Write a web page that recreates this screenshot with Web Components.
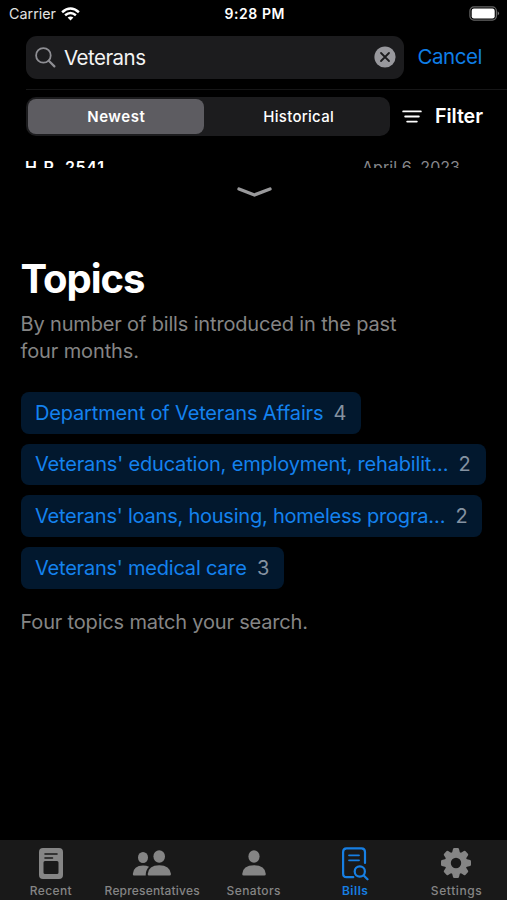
<!DOCTYPE html>
<html lang="en">
<head>
<meta charset="utf-8">
<title>Bills</title>
<style>
html,body{margin:0;background:#000;height:100%}
body{font-family:Inter,"Liberation Sans",sans-serif;color:#fff;overflow:hidden}
</style>
</head>
<body>
<bills-app></bills-app>
<script>
const define=(name,html,setup)=>customElements.define(name,class extends HTMLElement{
  connectedCallback(){
    if(this.shadowRoot)return;
    const root=this.attachShadow({mode:'open'});
    root.innerHTML=html;
    if(setup)setup(this,root);
  }
});

/* One line of text tracked to fill the given width. */
define('fit-text','<style>:host{display:block;flex:none;white-space:pre}span{display:inline-block}</style><span></span>',(el,root)=>{
  const span=root.querySelector('span'),text=el.getAttribute('text'),w=+el.getAttribute('w');
  span.textContent=text;
  el.style.width=w+'px';
  const natural=span.getBoundingClientRect().width;
  span.style.letterSpacing=(w-natural)/(text.length-1)+'px';
});

define('status-bar',`<style>
:host{display:grid;grid-template-columns:1fr auto 1fr;align-items:center;height:27px;padding:0 7px 0 9px;font-size:14.3px;line-height:18px;box-sizing:border-box}
.l{display:flex;align-items:center;gap:5px;color:#e2e2e2}.c{font-weight:600;font-size:14px}.r{justify-self:end;display:block}
</style>
<div class="l"><fit-text text="Carrier" w="47"></fit-text>
<svg width="19" height="14" viewBox="0 0 19 14" fill="none" stroke="#fff" stroke-width="2.5"><path d="M1.1 5.2Q9.5-2.2 17.9 5.2M4.1 8.3Q9.5 3.7 14.9 8.3"/><path d="M6.6 10.6Q9.5 8.2 12.4 10.6L9.5 13.6Z" fill="#fff" stroke="none"/></svg></div>
<div class="c"><fit-text text="9:28 PM" w="60"></fit-text></div>
<svg class="r" width="31" height="15" viewBox="0 0 31 15"><rect x=".9" y=".9" width="26.5" height="13.2" rx="4" fill="none" stroke="#666" stroke-width="1.2"/><rect x="2.7" y="2.6" width="23" height="9.8" rx="2.2" fill="#fff"/><path d="M28.7 5.2Q31.4 7.4 28.7 9.6Z" fill="#777"/></svg>`);

define('search-row',`<style>
:host{display:flex;align-items:center;padding:8.5px 0 10px 26px;font-size:20.5px;line-height:26px;gap:13.5px}
.f{display:flex;align-items:center;box-sizing:border-box;width:378px;height:43.5px;border-radius:11px;background:#1c1c1e;padding:0 8px 0 9px}
.f fit-text{margin-left:8px;margin-right:auto;margin-top:1px;color:#f4f4f4}
.c{color:#0f7ee6}svg{display:block}
</style>
<div class="f"><svg width="21" height="21" viewBox="0 0 21 21" fill="none" stroke="#8e8e93" stroke-width="1.8" stroke-linecap="round"><circle cx="8.4" cy="8.4" r="7.3"/><path d="M13.8 13.8L19.4 19.4" stroke-width="2.2"/></svg>
<fit-text text="Veterans" w="82"></fit-text>
<svg width="22" height="22" viewBox="0 0 22 22"><circle cx="11" cy="11" r="10.6" fill="#98989d"/><path d="M7 7l8 8M15 7l-8 8" stroke="#1c1c1e" stroke-width="1.8" stroke-linecap="round"/></svg></div>
<div class="c"><fit-text text="Cancel" w="65"></fit-text></div>`);

define('filter-row',`<style>
:host{display:flex;align-items:center;padding:7px 0 0 26px}
.s{display:flex;box-sizing:border-box;width:364px;height:39px;padding:2px;background:#1c1c1e;border-radius:10px;font-size:15px;line-height:20px;font-weight:500}
.s div{flex:1;display:flex;align-items:center;justify-content:center;border-radius:8px}
.s .on{flex:0 0 176px;background:#5d5c61;font-weight:600}
.s .off{padding-left:5px}
svg{margin:0 13px 0 12px}
.t{font-size:19.7px;line-height:26px;font-weight:600;margin-top:-2px}
</style>
<div class="s"><div class="on"><fit-text text="Newest" w="57.5"></fit-text></div><div class="off"><fit-text text="Historical" w="70.5"></fit-text></div></div>
<svg width="20" height="16" viewBox="0 0 20 16" stroke="#fff" stroke-width="1.9" stroke-linecap="round"><path d="M1.2 2.4H18.8M3.2 7.5H16.8M5.2 12.6H14.8"/></svg>
<div class="t"><fit-text text="Filter" w="48"></fit-text></div>`);

define('bill-peek',`<style>
:host{display:flex;justify-content:space-between;box-sizing:border-box;height:32px;padding:18.5px 47px 0 25px;overflow:hidden;font-size:16px;line-height:24px}
.a{font-weight:600}.b{color:#87878b}
</style>
<div class="a"><fit-text text="H.R. 2541" w="79"></fit-text></div><div class="b"><fit-text text="April 6, 2023" w="98"></fit-text></div>`);

define('topic-chip',`<style>
:host{display:flex;align-items:center;gap:10px;box-sizing:border-box;height:41.5px;padding-left:14.5px;border-radius:8px;background:#02182e;color:#1482ef;font-size:20px;line-height:26px}
.n{color:#8592a1}
</style><span class="n"></span>`,(el,root)=>{
  el.style.width=el.getAttribute('width')+'px';
  const n=root.querySelector('.n'),t=document.createElement('fit-text');
  n.textContent=el.getAttribute('count');
  t.setAttribute('text',el.getAttribute('label'));t.setAttribute('w',el.getAttribute('tw'));
  n.before(t);
});

define('topic-panel',`<style>
:host{display:block;padding:19px 0 0 20.5px;font-size:20px;line-height:27px;color:#858585}
.h{display:block;margin:0 0 0 216px}
h1{margin:57px 0 0;color:#fff;font-size:40px;line-height:48px;font-weight:700}
.d{margin-top:8px}
.g{display:flex;flex-direction:column;gap:10.2px;margin:27px 0 20px}
</style>
<svg class="h" width="35" height="11" viewBox="0 0 35 11" fill="none" stroke="#99999b" stroke-width="3.4" stroke-linecap="round" stroke-linejoin="round"><path d="M2 2L17.5 8L33 2"/></svg>
<h1><fit-text text="Topics" w="125"></fit-text></h1>
<div class="d"><fit-text text="By number of bills introduced in the past" w="376"></fit-text><fit-text text="four months." w="118.500"></fit-text></div>
<div class="g">
<topic-chip label="Department of Veterans Affairs" tw="288.500" count="4" width="340"></topic-chip>
<topic-chip label="Veterans' education, employment, rehabilit…" tw="413.500" count="2" width="465"></topic-chip>
<topic-chip label="Veterans' loans, housing, homeless progra…" tw="410.500" count="2" width="461.5"></topic-chip>
<topic-chip label="Veterans' medical care" tw="212" count="3" width="263.5"></topic-chip>
</div>
<fit-text text="Four topics match your search." w="287.500"></fit-text>`);

define('tab-item',`<style>
:host{flex:1;display:flex;flex-direction:column;align-items:center;color:#858585;font-size:12px;line-height:16px;font-weight:500}
:host([active]){color:#177fe3;font-weight:600}
::slotted(svg){display:block;height:34px;margin-top:7px}
.l{margin-top:2px}
</style><slot></slot><div class="l"></div>`,(el,root)=>{
  const t=document.createElement('fit-text');
  t.setAttribute('text',el.getAttribute('label'));t.setAttribute('w',el.getAttribute('tw'));
  root.querySelector('.l').append(t);
});

let teeth='';
for(let i=0;i<8;i++)teeth+=`<path transform="rotate(${i*45} 16 16)" d="M11.8 7L13 1.9Q13.3 1 14.2 1H17.8Q18.7 1 19 1.9L20.200 7Z"/>`;

define('tab-bar',`<style>:host{display:flex;flex:none;height:60px;background:#191919}</style>
<tab-item label="Recent" tw="42"><svg width="26" height="34" viewBox="0 0 26 34"><path fill="currentColor" fill-rule="evenodd" d="M5 1H21Q25 1 25 5V28Q25 32 21 32H5Q1 32 1 28V5Q1 1 5 1ZM7 14Q5.5 14 5.5 15.500V25.500Q5.500 27 7 27H19Q20.500 27 20.500 25.500V15.500Q20.500 14 19 14Z"/><path d="M7 7H19M7 11H14.500" stroke="#191919" stroke-width="1.6" stroke-linecap="round"/></svg></tab-item>
<tab-item label="Representatives" tw="95"><svg width="40" height="34" viewBox="0 0 40 34" fill="currentColor"><ellipse cx="11" cy="10.500" rx="5" ry="5.500"/><path d="M2 28.500Q.8 28.500 .8 27Q1.500 18.500 11 18.500Q14.500 18.500 17 19.800Q13.800 23 13.700 28.500Z"/><ellipse cx="27.200" cy="9.500" rx="5.800" ry="6.200"/><path d="M17 28.500Q15.700 28.500 15.700 27Q16.500 18.200 27.200 18.200T39 27Q39 28.500 37.500 28.500Z"/></svg></tab-item>
<tab-item label="Senators" tw="54"><svg width="26" height="34" viewBox="0 0 26 34" fill="currentColor"><ellipse cx="13" cy="9.500" rx="5.600" ry="6.200"/><path d="M2.700 28.500Q1.200 28.500 1.200 27Q1.800 18.200 13 18.200T24.800 27Q24.800 28.500 23.300 28.500Z"/></svg></tab-item>
<tab-item active label="Bills" tw="26"><svg width="28" height="34" viewBox="0 0 28 34" fill="none" stroke="currentColor" stroke-width="2.200" stroke-linecap="round"><path d="M12.300 30.200H5.500Q2.100 30.200 2.100 26.500V5Q2.100 1.400 5.500 1.400H20.500Q24 1.400 24 5V16"/><path d="M8 8.300H18M8 13.300H18" stroke-width="1.800"/><circle cx="18.800" cy="24.500" r="5.100"/><path d="M22.700 28.500L26.500 32.300"/></svg></tab-item>
<tab-item label="Settings" tw="51"><svg width="32" height="34" viewBox="0 0 32 34" fill="currentColor">${teeth}<circle cx="16" cy="16" r="8.200" fill="none" stroke="currentColor" stroke-width="6"/></svg></tab-item>`);

define('bills-app',`<style>
:host{display:flex;flex-direction:column;height:900px;width:507px;background:#000;overflow:hidden}
status-bar,search-row,filter-row,bill-peek{flex:none}
hr{flex:none;margin:0 0 0 26px;border:0;height:1px;background:#161617}
topic-panel{flex:1}
</style>
<status-bar></status-bar><search-row></search-row><hr><filter-row></filter-row><bill-peek></bill-peek><topic-panel></topic-panel><tab-bar></tab-bar>`);
</script>
</body>
</html>
